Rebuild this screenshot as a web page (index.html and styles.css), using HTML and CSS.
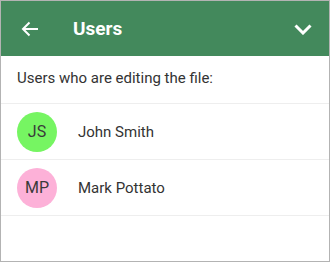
FILE: index.html
```html
<!DOCTYPE html>
<html lang="en">
<head>
  <meta charset="UTF-8">
  <meta name="viewport" content="width=device-width, initial-scale=1.0">
  <title>Users</title>
  <link rel="stylesheet" href="styles.css">
</head>
<body>
  <div class="panel">
    <div class="header">
      <button class="icon-btn back">
        <svg width="18" height="16" viewBox="0 0 18 16"><path d="M17 8H2M8.5 1.5 2 8l6.5 6.5" fill="none" stroke="#fff" stroke-width="2"/></svg>
      </button>
      <h1>Users</h1>
      <button class="icon-btn toggle">
        <svg width="20" height="12" viewBox="0 0 20 12"><path d="M2.5 2.5l7.5 7.5 7.5-7.5" fill="none" stroke="#fff" stroke-width="3"/></svg>
      </button>
    </div>

    <div class="intro">Users who are editing the file:</div>

    <ul class="user-list">
      <li class="user-item">
        <span class="avatar green">JS</span>
        <span class="user-name">John Smith</span>
      </li>
      <li class="user-item">
        <span class="avatar pink">MP</span>
        <span class="user-name">Mark Pottato</span>
      </li>
    </ul>
  </div>
</body>
</html>
```

FILE: styles.css
```css
body {
  margin: 0;
  padding: 0;
  font-family: Roboto, "Liberation Sans", sans-serif;
  background-color: #ffffff;
  color: #333;
}
.panel {
  width: 328px;
  height: 260px;
  border: 1px solid #b3b3b3;
  overflow: hidden;
}
.header {
  display: flex;
  align-items: center;
  height: 55px;
  background-color: #43895c;
  color: #fff;
  padding: 0 16px 0 20px;
}
.header h1 {
  flex-grow: 1;
  margin: 0 0 0 34px;
  font-size: 19px;
  font-weight: 700;
}
.icon-btn {
  display: flex;
  align-items: center;
  padding: 0;
  margin: 0;
  border: none;
  background: none;
  cursor: pointer;
}
.back {
  margin-top: 1px;
}
.intro {
  height: 47px;
  line-height: 45px;
  padding: 0 16px;
  font-size: 15px;
  border-bottom: 1px solid #eee;
}
.user-list {
  list-style: none;
  margin: 0;
  padding: 0;
}
.user-item {
  display: flex;
  align-items: center;
  height: 55px;
  padding: 0 16px;
  border-bottom: 1px solid #eee;
}
.avatar {
  display: flex;
  align-items: center;
  justify-content: center;
  width: 40px;
  height: 40px;
  border-radius: 50%;
  font-size: 16px;
  color: #3a3a3a;
}
.avatar.green {
  background: #76f562;
}
.avatar.pink {
  background: #fdb1d8;
}
.user-name {
  margin-left: 21px;
  font-size: 15px;
}
```
